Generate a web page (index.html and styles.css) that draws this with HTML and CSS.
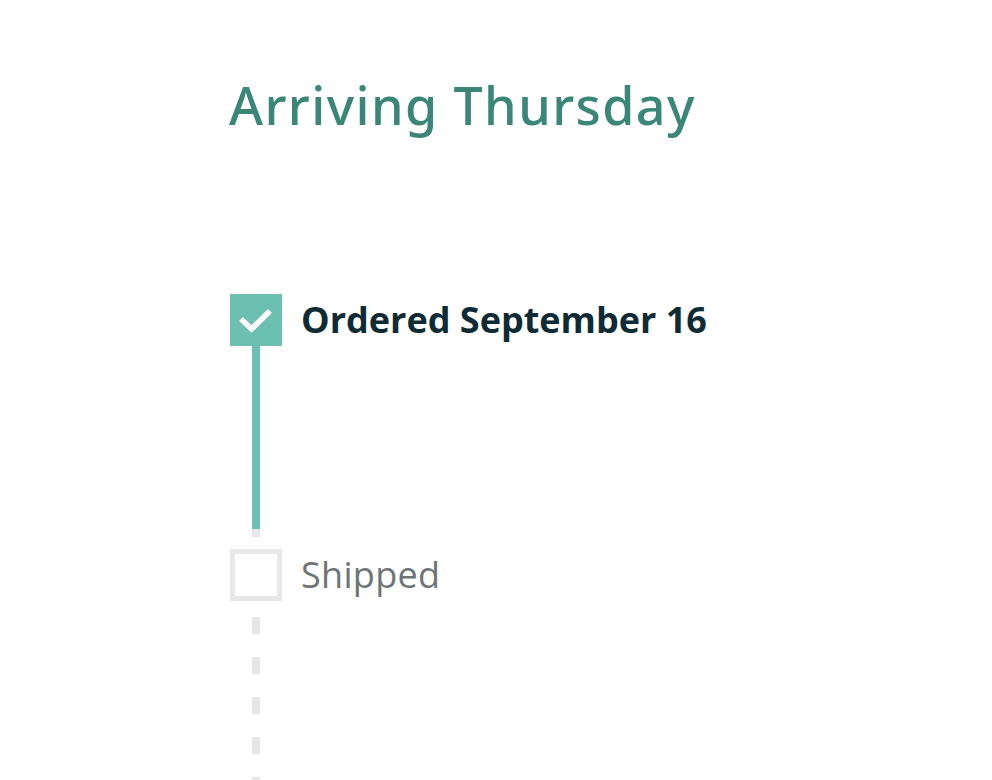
FILE: index.html
```html
<!DOCTYPE html>
<html lang="en">
<head>
<meta charset="utf-8">
<title>Arriving Thursday</title>
<link rel="stylesheet" href="styles.css">
</head>
<body>
<main class="tracker">
  <h1 class="tracker-title">Arriving Thursday</h1>
  <ol class="timeline">
    <li class="step step-done">
      <span class="step-box">
        <svg class="step-check" viewBox="0 0 52 52" width="52" height="52" aria-hidden="true">
          <path d="M13 27 L21.5 35 L38 19" fill="none" stroke="#fff" stroke-width="5.5" stroke-linecap="square" stroke-linejoin="miter"/>
        </svg>
      </span>
      <span class="step-label">Ordered September 16</span>
    </li>
    <li class="connector connector-done" aria-hidden="true"></li>
    <li class="step step-pending">
      <span class="step-box"></span>
      <span class="step-label">Shipped</span>
    </li>
    <li class="connector connector-pending" aria-hidden="true"></li>
  </ol>
</main>
</body>
</html>
```

FILE: styles.css
```css
html, body {
  margin: 0;
  padding: 0;
  background: #ffffff;
  overflow: hidden;
}

body {
  font-family: "Open Sans", "Noto Sans", sans-serif;
}

.tracker {
  padding: 72px 0 0 229px;
  height: 780px;
  box-sizing: border-box;
}

.tracker-title {
  margin: 0;
  font-family: "Noto Sans", "Open Sans", sans-serif;
  font-size: 52px;
  font-weight: 500;
  line-height: 66px;
  color: #3a8677;
  letter-spacing: 1.4px;
}

.timeline {
  list-style: none;
  margin: 156px 0 0 1px;
  padding: 0;
  display: flex;
  flex-direction: column;
}

.step {
  display: flex;
  align-items: center;
  gap: 19px;
}

.step-box {
  width: 52px;
  height: 52px;
  box-sizing: border-box;
  flex: none;
  display: block;
}

.step-check {
  display: block;
}

.step-done .step-box {
  background: #6cc0b2;
}

.step-pending .step-box {
  border: 5px solid #e7e7e7;
}

.step-label {
  font-size: 36px;
  line-height: 44px;
}

.step-done .step-label {
  font-weight: 700;
  color: #0f2b36;
}

.step-pending .step-label {
  font-weight: 400;
  color: #6e7475;
  letter-spacing: 0.3px;
}

.connector {
  width: 8px;
  margin-left: 22px;
}

.connector-done {
  height: 203px;
  background: linear-gradient(to bottom, #6cc0b2 0, #6cc0b2 183px, #e9e6e8 183px, #e9e6e8 191px, transparent 191px);
}

.connector-pending {
  margin-top: 16px;
  height: 200px;
  background: repeating-linear-gradient(to bottom, #e6e6e6 0, #e6e6e6 17px, transparent 17px, transparent 40px);
}
```
